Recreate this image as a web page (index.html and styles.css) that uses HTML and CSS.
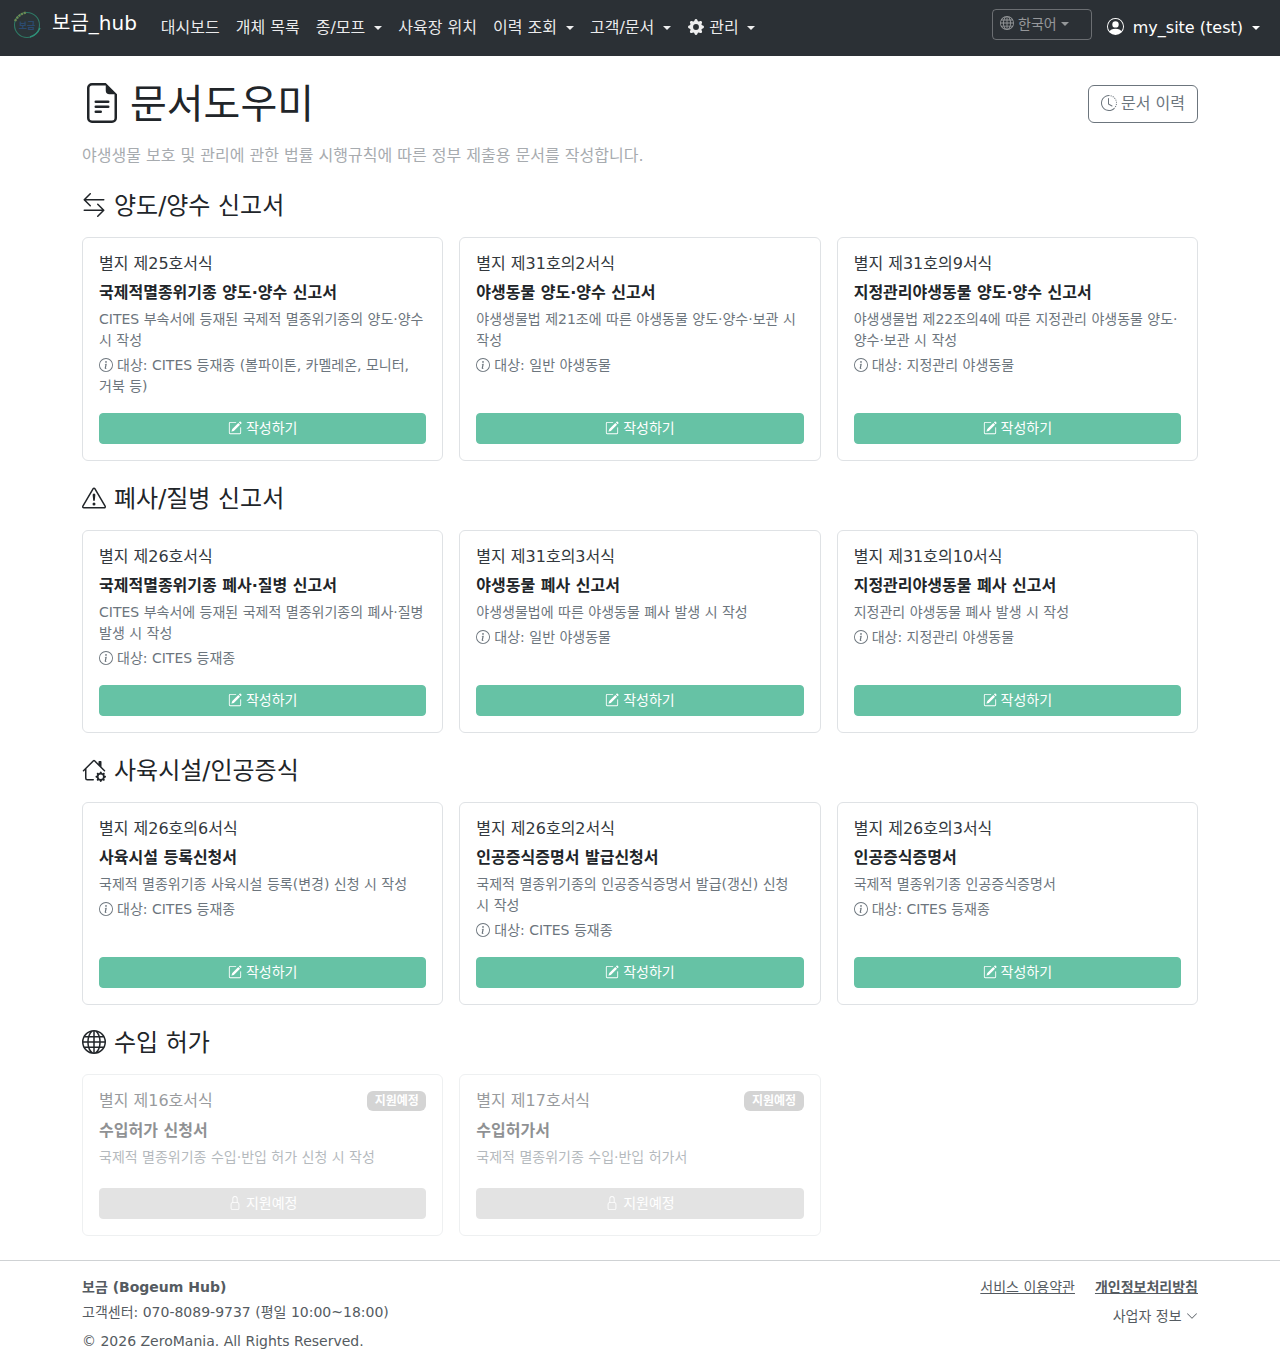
FILE: index.html
```html
<!DOCTYPE html>
<html lang="ko">
<head>
  <meta charset="UTF-8" />
  <meta name="viewport" content="width=device-width, initial-scale=1.0"/>
  <title>문서도우미</title>
  <link rel="stylesheet" href="styles.css">
</head>
<body>

<!-- icon set -->
<svg class="icon-defs" xmlns="http://www.w3.org/2000/svg">
  <symbol id="i-file" viewBox="0 0 16 16"><path d="M5.5 7a.5.5 0 0 0 0 1h5a.5.5 0 0 0 0-1h-5zM5 9.5a.5.5 0 0 1 .5-.5h5a.5.5 0 0 1 0 1h-5a.5.5 0 0 1-.5-.5zm0 2a.5.5 0 0 1 .5-.5h2a.5.5 0 0 1 0 1h-2a.5.5 0 0 1-.5-.5z"/><path d="M9.5 0H4a2 2 0 0 0-2 2v12a2 2 0 0 0 2 2h8a2 2 0 0 0 2-2V4.5L9.5 0zm0 1v2A1.5 1.5 0 0 0 11 4.5h2V14a1 1 0 0 1-1 1H4a1 1 0 0 1-1-1V2a1 1 0 0 1 1-1h5.5z"/></symbol>
  <symbol id="i-arrows" viewBox="0 0 16 16"><path fill-rule="evenodd" d="M1 11.5a.5.5 0 0 0 .5.5h11.793l-3.147 3.146a.5.5 0 0 0 .708.708l4-4a.5.5 0 0 0 0-.708l-4-4a.5.5 0 0 0-.708.708L13.293 11H1.5a.5.5 0 0 0-.5.5zm14-7a.5.5 0 0 1-.5.5H2.707l3.147 3.146a.5.5 0 1 1-.708.708l-4-4a.5.5 0 0 1 0-.708l4-4a.5.5 0 1 1 .708.708L2.707 4H14.5a.5.5 0 0 1 .5.5z"/></symbol>
  <symbol id="i-warn" viewBox="0 0 16 16"><path d="M7.938 2.016A.13.13 0 0 1 8.002 2a.13.13 0 0 1 .063.016.146.146 0 0 1 .054.057l6.857 11.667c.036.06.035.124.002.183a.163.163 0 0 1-.054.06.116.116 0 0 1-.066.017H1.146a.115.115 0 0 1-.066-.017.163.163 0 0 1-.054-.06.176.176 0 0 1 .002-.183L7.884 2.073a.147.147 0 0 1 .054-.057zm1.044-.45a1.13 1.13 0 0 0-1.96 0L.165 13.233c-.457.778.091 1.767.98 1.767h13.713c.889 0 1.438-.99.98-1.767L8.982 1.566z"/><path d="M7.002 12a1 1 0 1 1 2 0 1 1 0 0 1-2 0zM7.1 5.995a.905.905 0 1 1 1.8 0l-.35 3.507a.552.552 0 0 1-1.1 0L7.1 5.995z"/></symbol>
  <symbol id="i-house" viewBox="0 0 16 16"><path d="M7.293 1.5a1 1 0 0 1 1.414 0L11 3.793V2.5a.5.5 0 0 1 .5-.5h1a.5.5 0 0 1 .5.5v3.293l2.354 2.353a.5.5 0 0 1-.708.708L8 2.207l-5 5V13.5a.5.5 0 0 0 .5.5h4a.5.5 0 0 1 0 1h-4A1.5 1.5 0 0 1 2 13.5V8.207l-.646.647a.5.5 0 1 1-.708-.708L7.293 1.5Z"/><path d="M11.886 9.46c.18-.613 1.048-.613 1.229 0l.043.148a.64.64 0 0 0 .921.382l.136-.074c.561-.306 1.175.308.87.869l-.075.136a.64.64 0 0 0 .382.92l.149.045c.612.18.612 1.048 0 1.229l-.15.043a.64.64 0 0 0-.38.921l.074.136c.305.561-.309 1.175-.87.87l-.136-.075a.64.64 0 0 0-.92.382l-.045.149c-.18.612-1.048.612-1.229 0l-.043-.15a.64.64 0 0 0-.921-.38l-.136.074c-.561.305-1.175-.309-.87-.87l.075-.136a.64.64 0 0 0-.382-.92l-.148-.044c-.613-.181-.613-1.049 0-1.23l.148-.043a.64.64 0 0 0 .382-.921l-.074-.136c-.306-.561.308-1.175.869-.87l.136.075a.64.64 0 0 0 .92-.382l.045-.148ZM14 12.5a1.5 1.5 0 1 0-3 0 1.5 1.5 0 0 0 3 0Z"/></symbol>
  <symbol id="i-globe" viewBox="0 0 16 16"><path d="M0 8a8 8 0 1 1 16 0A8 8 0 0 1 0 8zm7.5-6.923c-.67.204-1.335.82-1.887 1.855A7.97 7.97 0 0 0 5.145 4H7.5V1.077zM4.09 4a9.267 9.267 0 0 1 .64-1.539 6.7 6.7 0 0 1 .597-.933A7.025 7.025 0 0 0 2.255 4H4.09zm-.582 3.5c.03-.877.138-1.718.312-2.5H1.674a6.958 6.958 0 0 0-.656 2.5h2.49zM4.847 5a12.5 12.5 0 0 0-.338 2.5H7.5V5H4.847zM8.5 5v2.5h2.99a12.495 12.495 0 0 0-.337-2.5H8.5zM4.51 8.5a12.5 12.5 0 0 0 .337 2.5H7.5V8.5H4.51zm3.99 0V11h2.653c.187-.765.306-1.608.338-2.5H8.5zM5.145 12c.138.386.295.744.468 1.068.552 1.035 1.218 1.65 1.887 1.855V12H5.145zm.182 2.472a6.696 6.696 0 0 1-.597-.933A9.268 9.268 0 0 1 4.09 12H2.255a7.024 7.024 0 0 0 3.072 2.472zM3.82 11a13.652 13.652 0 0 1-.312-2.5h-2.49c.062.89.291 1.733.656 2.5H3.82zm6.853 3.472A7.024 7.024 0 0 0 13.745 12H11.91a9.27 9.27 0 0 1-.64 1.539 6.688 6.688 0 0 1-.597.933zM8.5 12v2.923c.67-.204 1.335-.82 1.887-1.855.173-.324.33-.682.468-1.068H8.5zm3.68-1h2.146c.365-.767.594-1.61.656-2.5h-2.49a13.65 13.65 0 0 1-.312 2.5zm2.802-3.5a6.959 6.959 0 0 0-.656-2.5H12.18c.174.782.282 1.623.312 2.5h2.49zM11.27 2.461c.247.464.462.98.64 1.539h1.835a7.024 7.024 0 0 0-3.072-2.472c.218.284.418.598.597.933zM10.855 4a7.966 7.966 0 0 0-.468-1.068C9.835 1.897 9.17 1.282 8.5 1.077V4h2.355z"/></symbol>
  <symbol id="i-info" viewBox="0 0 16 16"><path d="M8 15A7 7 0 1 1 8 1a7 7 0 0 1 0 14zm0 1A8 8 0 1 0 8 0a8 8 0 0 0 0 16z"/><path d="m8.93 6.588-2.29.287-.082.38.45.083c.294.07.352.176.288.469l-.738 3.468c-.194.897.105 1.319.808 1.319.545 0 1.178-.252 1.465-.598l.088-.416c-.2.176-.492.246-.686.246-.275 0-.375-.193-.304-.533L8.93 6.588zM9 4.5a1 1 0 1 1-2 0 1 1 0 0 1 2 0z"/></symbol>
  <symbol id="i-pencil" viewBox="0 0 16 16"><path d="M15.502 1.94a.5.5 0 0 1 0 .706L14.459 3.69l-2-2L13.502.646a.5.5 0 0 1 .707 0l1.293 1.293zm-1.75 2.456-2-2L4.939 9.21a.5.5 0 0 0-.121.196l-.805 2.414a.25.25 0 0 0 .316.316l2.414-.805a.5.5 0 0 0 .196-.12l6.813-6.814z"/><path fill-rule="evenodd" d="M1 13.5A1.5 1.5 0 0 0 2.5 15h11a1.5 1.5 0 0 0 1.5-1.5v-6a.5.5 0 0 0-1 0v6a.5.5 0 0 1-.5.5h-11a.5.5 0 0 1-.5-.5v-11a.5.5 0 0 1 .5-.5H9a.5.5 0 0 0 0-1H2.5A1.5 1.5 0 0 0 1 2.5v11z"/></symbol>
  <symbol id="i-lock" viewBox="0 0 16 16"><path d="M8 1a2 2 0 0 1 2 2v4H6V3a2 2 0 0 1 2-2zm3 6V3a3 3 0 0 0-6 0v4a2 2 0 0 0-2 2v5a2 2 0 0 0 2 2h6a2 2 0 0 0 2-2V9a2 2 0 0 0-2-2zM5 8h6a1 1 0 0 1 1 1v5a1 1 0 0 1-1 1H5a1 1 0 0 1-1-1V9a1 1 0 0 1 1-1z"/></symbol>
  <symbol id="i-clock" viewBox="0 0 16 16"><path d="M8.515 1.019A7 7 0 0 0 8 1V0a8 8 0 0 1 .589.022l-.074.997zm2.004.45a7.003 7.003 0 0 0-.985-.299l.219-.976c.383.086.76.2 1.126.342l-.36.933zm1.37.71a7.01 7.01 0 0 0-.439-.27l.493-.87a8.025 8.025 0 0 1 .979.654l-.615.789a6.996 6.996 0 0 0-.418-.302zm1.834 1.79a6.99 6.99 0 0 0-.653-.796l.724-.69c.27.285.52.59.747.91l-.818.576zm.744 1.352a7.08 7.08 0 0 0-.214-.468l.893-.45a7.976 7.976 0 0 1 .45 1.088l-.95.313a7.023 7.023 0 0 0-.179-.483zm.53 2.507a6.991 6.991 0 0 0-.1-1.025l.985-.17c.067.386.106.778.116 1.17l-1 .025zm-.131 1.538c.033-.17.06-.339.081-.51l.993.123a7.957 7.957 0 0 1-.23 1.155l-.964-.267c.046-.165.086-.332.12-.501zm-.952 2.379c.184-.29.346-.594.486-.908l.914.405c-.16.36-.345.706-.555 1.038l-.845-.535zm-.964 1.205c.122-.122.239-.248.35-.378l.758.653a8.073 8.073 0 0 1-.401.432l-.707-.707z"/><path d="M8 1a7 7 0 1 0 4.95 11.95l.707.707A8.001 8.001 0 1 1 8 0v1z"/><path d="M7.5 3a.5.5 0 0 1 .5.5v5.21l3.248 1.856a.5.5 0 0 1-.496.868l-3.5-2A.5.5 0 0 1 7 9V3.5a.5.5 0 0 1 .5-.5z"/></symbol>
  <symbol id="i-user" viewBox="0 0 16 16"><path d="M11 6a3 3 0 1 1-6 0 3 3 0 0 1 6 0z"/><path fill-rule="evenodd" d="M0 8a8 8 0 1 1 16 0A8 8 0 0 1 0 8zm8-7a7 7 0 0 0-5.468 11.37C3.242 11.226 4.805 10 8 10s4.757 1.225 5.468 2.37A7 7 0 0 0 8 1z"/></symbol>
  <symbol id="i-gear" viewBox="0 0 16 16"><path d="M9.405 1.05c-.413-1.4-2.397-1.4-2.81 0l-.1.34a1.464 1.464 0 0 1-2.105.872l-.31-.17c-1.283-.698-2.686.705-1.987 1.987l.169.311c.446.82.023 1.841-.872 2.105l-.34.1c-1.4.413-1.4 2.397 0 2.81l.34.1a1.464 1.464 0 0 1 .872 2.105l-.17.31c-.698 1.283.705 2.686 1.987 1.987l.311-.169a1.464 1.464 0 0 1 2.105.872l.1.34c.413 1.4 2.397 1.4 2.81 0l.1-.34a1.464 1.464 0 0 1 2.105-.872l.31.17c1.283.698 2.686-.705 1.987-1.987l-.169-.311a1.464 1.464 0 0 1 .872-2.105l.34-.1c1.4-.413 1.4-2.397 0-2.81l-.34-.1a1.464 1.464 0 0 1-.872-2.105l.17-.31c.698-1.283-.705-2.686-1.987-1.987l-.311.169a1.464 1.464 0 0 1-2.105-.872l-.1-.34zM8 10.93a2.929 2.929 0 1 1 0-5.86 2.929 2.929 0 0 1 0 5.858z"/></symbol>
  <symbol id="i-chevron" viewBox="0 0 16 16"><path fill-rule="evenodd" d="M1.646 4.646a.5.5 0 0 1 .708 0L8 10.293l5.646-5.647a.5.5 0 0 1 .708.708l-6 6a.5.5 0 0 1-.708 0l-6-6a.5.5 0 0 1 0-.708z"/></symbol>
</svg>

<nav class="navbar">
  <a class="brand" href="#">
    <svg class="brand-logo" viewBox="0 0 30 30" xmlns="http://www.w3.org/2000/svg">
      <circle cx="15" cy="15" r="12.5" fill="#2b3438" stroke="#2f7a66" stroke-width="1.1"/>
      <path d="M3 11 Q7 4 14 2.5" fill="none" stroke="#6f8a52" stroke-width="2.4" stroke-dasharray="2 1"/>
      <path d="M18 27 Q25 25 28 18" fill="none" stroke="#2f8f78" stroke-width="1.4"/>
      <text x="15" y="18.5" text-anchor="middle" class="brand-logo-text">보금</text>
    </svg>
    <span>보금_hub</span>
  </a>
  <ul class="nav-list">
    <li><a href="#">대시보드</a></li>
    <li><a href="#">개체 목록</a></li>
    <li><a class="caret" href="#">종/모프</a></li>
    <li><a href="#">사육장 위치</a></li>
    <li><a class="caret" href="#">이력 조회</a></li>
    <li><a class="caret" href="#">고객/문서</a></li>
    <li><a class="caret caret-tight" href="#"><svg class="icon nav-gear"><use href="#i-gear"/></svg> 관리</a></li>
  </ul>
  <div class="nav-right">
    <button class="lang-btn" type="button" disabled><svg class="icon"><use href="#i-globe"/></svg> 한국어<span class="lang-caret"></span></button>
    <a class="caret user-link" href="#"><svg class="icon user-icon"><use href="#i-user"/></svg> my_site (test)</a>
  </div>
</nav>

<main class="container">
  <div class="page-head">
    <h1><svg class="icon"><use href="#i-file"/></svg>문서도우미</h1>
    <a class="history-btn" href="#"><svg class="icon"><use href="#i-clock"/></svg>문서 이력</a>
  </div>
  <p class="page-sub">야생생물 보호 및 관리에 관한 법률 시행규칙에 따른 정부 제출용 문서를 작성합니다.</p>

  <section>
    <h4><svg class="icon"><use href="#i-arrows"/></svg>양도/양수 신고서</h4>
    <div class="doc-grid">
      <div class="doc-card">
        <h6 class="doc-form">별지 제25호서식</h6>
        <h6 class="doc-title">국제적멸종위기종 양도·양수 신고서</h6>
        <p class="doc-desc">CITES 부속서에 등재된 국제적 멸종위기종의 양도·양수 시 작성</p>
        <p class="doc-target"><svg class="icon"><use href="#i-info"/></svg>대상: CITES 등재종 (볼파이톤, 카멜레온, 모니터, 거북 등)</p>
        <a class="doc-btn" href="#"><svg class="icon"><use href="#i-pencil"/></svg>작성하기</a>
      </div>
      <div class="doc-card">
        <h6 class="doc-form">별지 제31호의2서식</h6>
        <h6 class="doc-title">야생동물 양도·양수 신고서</h6>
        <p class="doc-desc">야생생물법 제21조에 따른 야생동물 양도·양수·보관 시 작성</p>
        <p class="doc-target"><svg class="icon"><use href="#i-info"/></svg>대상: 일반 야생동물</p>
        <a class="doc-btn" href="#"><svg class="icon"><use href="#i-pencil"/></svg>작성하기</a>
      </div>
      <div class="doc-card">
        <h6 class="doc-form">별지 제31호의9서식</h6>
        <h6 class="doc-title">지정관리야생동물 양도·양수 신고서</h6>
        <p class="doc-desc">야생생물법 제22조의4에 따른 지정관리 야생동물 양도·양수·보관 시 작성</p>
        <p class="doc-target"><svg class="icon"><use href="#i-info"/></svg>대상: 지정관리 야생동물</p>
        <a class="doc-btn" href="#"><svg class="icon"><use href="#i-pencil"/></svg>작성하기</a>
      </div>
    </div>
  </section>

  <section>
    <h4><svg class="icon"><use href="#i-warn"/></svg>폐사/질병 신고서</h4>
    <div class="doc-grid">
      <div class="doc-card">
        <h6 class="doc-form">별지 제26호서식</h6>
        <h6 class="doc-title">국제적멸종위기종 폐사·질병 신고서</h6>
        <p class="doc-desc">CITES 부속서에 등재된 국제적 멸종위기종의 폐사·질병 발생 시 작성</p>
        <p class="doc-target"><svg class="icon"><use href="#i-info"/></svg>대상: CITES 등재종</p>
        <a class="doc-btn" href="#"><svg class="icon"><use href="#i-pencil"/></svg>작성하기</a>
      </div>
      <div class="doc-card">
        <h6 class="doc-form">별지 제31호의3서식</h6>
        <h6 class="doc-title">야생동물 폐사 신고서</h6>
        <p class="doc-desc">야생생물법에 따른 야생동물 폐사 발생 시 작성</p>
        <p class="doc-target"><svg class="icon"><use href="#i-info"/></svg>대상: 일반 야생동물</p>
        <a class="doc-btn" href="#"><svg class="icon"><use href="#i-pencil"/></svg>작성하기</a>
      </div>
      <div class="doc-card">
        <h6 class="doc-form">별지 제31호의10서식</h6>
        <h6 class="doc-title">지정관리야생동물 폐사 신고서</h6>
        <p class="doc-desc">지정관리 야생동물 폐사 발생 시 작성</p>
        <p class="doc-target"><svg class="icon"><use href="#i-info"/></svg>대상: 지정관리 야생동물</p>
        <a class="doc-btn" href="#"><svg class="icon"><use href="#i-pencil"/></svg>작성하기</a>
      </div>
    </div>
  </section>

  <section>
    <h4><svg class="icon"><use href="#i-house"/></svg>사육시설/인공증식</h4>
    <div class="doc-grid">
      <div class="doc-card">
        <h6 class="doc-form">별지 제26호의6서식</h6>
        <h6 class="doc-title">사육시설 등록신청서</h6>
        <p class="doc-desc">국제적 멸종위기종 사육시설 등록(변경) 신청 시 작성</p>
        <p class="doc-target"><svg class="icon"><use href="#i-info"/></svg>대상: CITES 등재종</p>
        <a class="doc-btn" href="#"><svg class="icon"><use href="#i-pencil"/></svg>작성하기</a>
      </div>
      <div class="doc-card">
        <h6 class="doc-form">별지 제26호의2서식</h6>
        <h6 class="doc-title">인공증식증명서 발급신청서</h6>
        <p class="doc-desc">국제적 멸종위기종의 인공증식증명서 발급(갱신) 신청 시 작성</p>
        <p class="doc-target"><svg class="icon"><use href="#i-info"/></svg>대상: CITES 등재종</p>
        <a class="doc-btn" href="#"><svg class="icon"><use href="#i-pencil"/></svg>작성하기</a>
      </div>
      <div class="doc-card">
        <h6 class="doc-form">별지 제26호의3서식</h6>
        <h6 class="doc-title">인공증식증명서</h6>
        <p class="doc-desc">국제적 멸종위기종 인공증식증명서</p>
        <p class="doc-target"><svg class="icon"><use href="#i-info"/></svg>대상: CITES 등재종</p>
        <a class="doc-btn" href="#"><svg class="icon"><use href="#i-pencil"/></svg>작성하기</a>
      </div>
    </div>
  </section>

  <section>
    <h4><svg class="icon"><use href="#i-globe"/></svg>수입 허가</h4>
    <div class="doc-grid">
      <div class="doc-card card-off">
        <div class="doc-head">
          <h6 class="doc-form">별지 제16호서식</h6>
          <span class="badge">지원예정</span>
        </div>
        <h6 class="doc-title">수입허가 신청서</h6>
        <p class="doc-desc">국제적 멸종위기종 수입·반입 허가 신청 시 작성</p>
        <span class="doc-btn"><svg class="icon"><use href="#i-lock"/></svg>지원예정</span>
      </div>
      <div class="doc-card card-off">
        <div class="doc-head">
          <h6 class="doc-form">별지 제17호서식</h6>
          <span class="badge">지원예정</span>
        </div>
        <h6 class="doc-title">수입허가서</h6>
        <p class="doc-desc">국제적 멸종위기종 수입·반입 허가서</p>
        <span class="doc-btn"><svg class="icon"><use href="#i-lock"/></svg>지원예정</span>
      </div>
    </div>
  </section>
</main>

<footer class="site-footer">
  <div class="footer-inner">
    <div class="footer-left">
      <strong>보금 (Bogeum Hub)</strong>
      <div class="footer-contact">고객센터: 070-8089-9737 (평일 10:00~18:00)</div>
      <div class="footer-copy">© 2026 ZeroMania. All Rights Reserved.</div>
    </div>
    <div class="footer-right">
      <div class="footer-links">
        <a href="#">서비스 이용약관</a>
        <a class="strong-link" href="#">개인정보처리방침</a>
      </div>
      <div class="footer-biz">사업자 정보 <svg class="icon"><use href="#i-chevron"/></svg></div>
    </div>
  </div>
</footer>

</body>
</html>
```

FILE: styles.css
```css
* {
  box-sizing: border-box;
}

body {
  margin: 0;
  font-family: "DejaVu Sans", "Noto Sans CJK KR", sans-serif;
  font-size: 16px;
  line-height: 1.5;
  color: #212529;
  background: #fff;
}

a {
  color: inherit;
  text-decoration: none;
}

.icon-defs {
  display: none;
}

.icon {
  width: 1em;
  height: 1em;
  fill: currentColor;
  vertical-align: -0.125em;
}

/* navbar */
.navbar {
  display: flex;
  align-items: center;
  height: 56px;
  padding: 0 12px;
  background: #2b3035;
  color: #fff;
}

.brand {
  display: flex;
  align-items: center;
  gap: 10px;
  margin-right: 16px;
  margin-top: -10px;
  font-size: 20px;
}

.brand-logo {
  width: 30px;
  height: 30px;
  margin-top: 4px;
}

.brand-logo-text {
  font-size: 9px;
  font-weight: 700;
  fill: #2b4a6f;
}

.nav-list {
  display: flex;
  list-style: none;
  margin: 0;
  padding: 0;
}

.nav-list a {
  display: block;
  padding: 8px;
  color: rgba(255, 255, 255, 0.92);
}

.nav-gear {
  margin-left: 1px;
}

.caret::after {
  content: "";
  display: inline-block;
  margin-left: 9px;
  vertical-align: 0.2em;
  border-top: 4.8px solid;
  border-right: 4.8px solid transparent;
  border-left: 4.8px solid transparent;
}

.caret-tight::after {
  margin-left: 8px;
}

.nav-right {
  display: flex;
  align-items: center;
  margin-left: auto;
  gap: 15px;
  padding-right: 8px;
}

.lang-btn {
  width: 100px;
  height: 31px;
  padding: 0 7px;
  margin-top: -8px;
  text-align: left;
  font: inherit;
  font-size: 14px;
  color: rgba(255, 255, 255, 0.5);
  background: transparent;
  border: 1px solid rgba(255, 255, 255, 0.3);
  border-radius: 4px;
  white-space: nowrap;
}

.lang-caret {
  display: inline-block;
  margin-left: 4px;
  vertical-align: 0.2em;
  border-top: 4px solid;
  border-right: 4px solid transparent;
  border-left: 4px solid transparent;
}

.user-link {
  white-space: nowrap;
}

.user-icon {
  width: 17px;
  height: 17px;
  margin-right: 4px;
}

/* page */
.container {
  width: 1140px;
  margin: 0 auto;
  padding: 24px 12px 0;
}

.page-head {
  display: flex;
  align-items: center;
  justify-content: space-between;
  margin-bottom: 16px;
}

h1 {
  margin: 0;
  font-size: 40px;
  font-weight: 400;
  line-height: 1.2;
}

h1 .icon {
  margin-right: 8px;
}

.history-btn {
  padding: 6px 12px;
  color: #6c757d;
  border: 1px solid #6c757d;
  border-radius: 6px;
}

.history-btn .icon {
  margin-right: 4px;
}

.page-sub {
  margin: 0 0 24px;
  color: #a7abaf;
}

section {
  margin-bottom: 24px;
}

h4 {
  margin: 0 0 16px;
  font-size: 24px;
  font-weight: 400;
  line-height: 1.2;
}

h4 .icon {
  margin-right: 8px;
}

.doc-grid {
  display: grid;
  grid-template-columns: repeat(3, minmax(0, 1fr));
  gap: 16px;
}

.doc-card {
  display: flex;
  flex-direction: column;
  padding: 16px;
  border: 1px solid #dfe2e5;
  border-radius: 6px;
  background: #fff;
}

h6 {
  font-size: 16px;
  line-height: 1.2;
}

.doc-form {
  margin: 0 0 10px;
  font-weight: 400;
  color: #33383d;
}

.doc-title {
  margin: 0 0 6.8px;
  font-weight: 700;
}

.doc-desc {
  margin: 0 0 4px;
  font-size: 14px;
  color: #6c757d;
}

.doc-target {
  margin: 0 0 16px;
  font-size: 14px;
  color: #6c757d;
}

.doc-target .icon {
  margin-right: 4px;
}

.doc-btn {
  display: block;
  margin-top: auto;
  padding: 4px 8px;
  font-size: 14px;
  text-align: center;
  color: #fff;
  background: #66c2a5;
  border: 1px solid #66c2a5;
  border-radius: 4px;
}

.doc-btn .icon {
  margin-right: 4px;
}

/* not supported yet */
.card-off {
  opacity: 0.5;
}

.card-off .doc-form {
  margin-bottom: 11px;
}

.card-off .doc-desc {
  margin-bottom: 20px;
}

.card-off .doc-btn {
  background: #c9c9c9;
  border-color: #c9c9c9;
}

.doc-head {
  display: flex;
  align-items: flex-start;
  justify-content: space-between;
}

.badge {
  padding: 3px 7.5px;
  font-size: 12px;
  font-weight: 700;
  line-height: 1.2;
  color: #fff;
  background: #aaa;
  border-radius: 6px;
}

/* footer */
.site-footer {
  border-top: 1px solid #cfd2d4;
  font-size: 14px;
  color: #555b61;
}

.footer-inner {
  display: flex;
  justify-content: space-between;
  width: 1140px;
  margin: 0 auto;
  padding: 16px 12px 14px;
}

.footer-contact {
  margin-top: 4px;
}

.footer-copy {
  margin-top: 8px;
}

.footer-right {
  text-align: right;
}

.footer-links {
  display: flex;
  gap: 20px;
}

.footer-links a {
  text-decoration: underline;
}

.strong-link {
  font-weight: 700;
}

.footer-biz {
  margin-top: 8px;
}

.footer-biz .icon {
  width: 12px;
  height: 12px;
  vertical-align: -1px;
}
```
